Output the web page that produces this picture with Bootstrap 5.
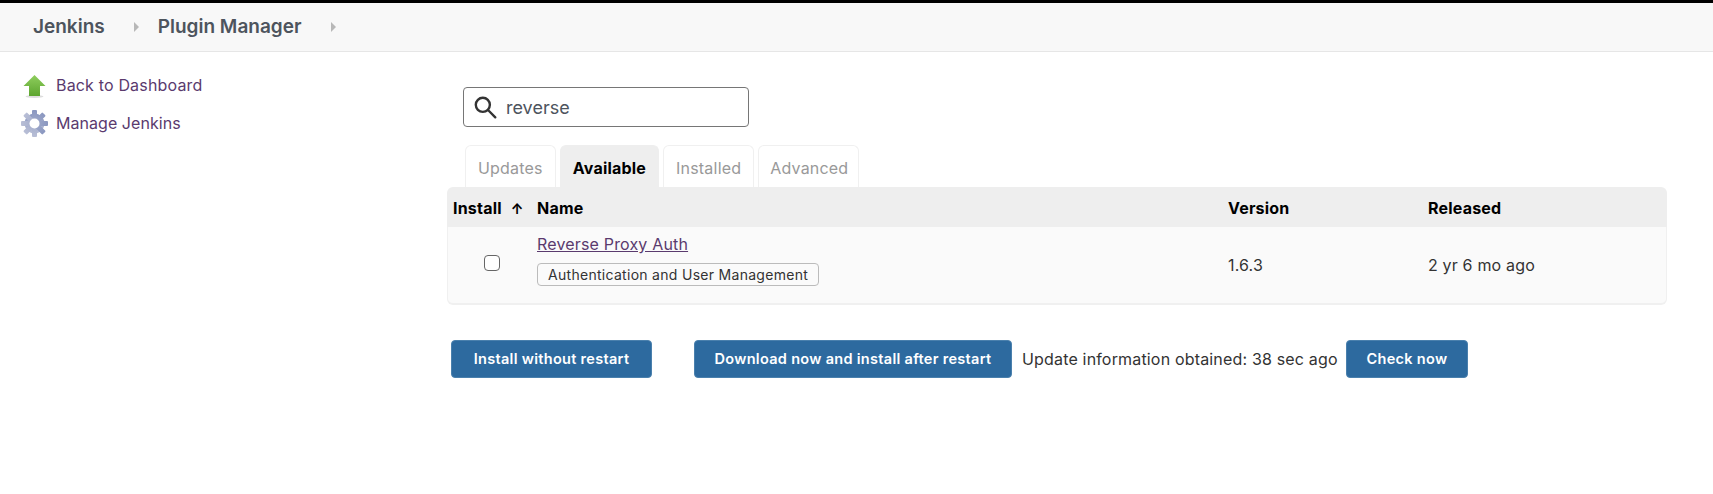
<!DOCTYPE html>
<html lang="en">
<head>
<meta charset="utf-8">
<title>Plugin Manager</title>
<link href="https://cdn.jsdelivr.net/npm/bootstrap@5.3.0/dist/css/bootstrap.min.css" rel="stylesheet">
<style>
html,body{height:494px;overflow:hidden}
body{font-family:Inter,"Liberation Sans",sans-serif;background:#fff;color:#333;font-size:15px;border-top:3px solid #000;letter-spacing:.17px}
.crumbbar{height:49px;background:#f8f8f8;border-bottom:1px solid #e6e6e6;padding-left:33px;color:#4d545d;font-weight:600;font-size:19px;letter-spacing:0}
.crumbsep{width:0;height:0;border-left:5px solid #b8b8b8;border-top:5px solid transparent;border-bottom:5px solid transparent}
.sep-a{margin:0 19px 0 29px}
.sep-b{margin-left:29px}
.sidepane{width:447px;flex:none;padding:14px 0 0 20px}
.sidelink{height:38px;color:#5a3a6e;text-decoration:none;font-size:16px;gap:7px}
.sidelink-tight{letter-spacing:.05px}
.sideicon{width:29px;height:29px;flex:none}
.mainpane{width:1220px;flex:none;padding-top:35px}
.searchbox{width:286px;height:40px;margin-left:16px;border:1px solid #767676;border-radius:4px;padding-left:8px;gap:8px}
.searchbox input{border:0;outline:0;background:transparent;width:230px;font-size:18px;color:#4d545d;font-family:inherit;padding:0}
.tabrow{margin:18px 0 0 18px;gap:4px;height:42px;list-style:none;padding:0}
.tabitem{height:42px;padding:2px 12px 0;border:1px solid #f0f0f0;border-bottom:0;border-radius:6px 6px 0 0;color:#999;font-size:16px;letter-spacing:.2px}
.tabitem.tab-on{background:#eee;border-color:#eee;color:#000;font-weight:700;padding:2px 12px 0}
.tabitem.tab-last{padding:2px 10px 0 11px}
.plugintable{width:1220px;height:118px;table-layout:fixed;margin:0;border-collapse:separate;border-spacing:0;--bs-table-bg:transparent}
.plugintable th{background:#eee;color:#000;height:40px;font-size:16px;font-weight:700;padding:2px 0 0;border:0;vertical-align:middle;letter-spacing:.2px}
.plugintable th:first-child{border-top-left-radius:6px}
.plugintable th:last-child{border-top-right-radius:6px}
.plugintable td{background:#fafafa;padding:0;border:0;border-bottom:2px solid #f0f0f0;vertical-align:middle;color:#333;font-size:16px}
.plugintable td:first-child{border-left:1px solid #f0f0f0;border-bottom-left-radius:6px}
.plugintable td:last-child{border-right:1px solid #f0f0f0;border-bottom-right-radius:6px}
.col-install{width:90px}
.col-name{width:691px}
.col-version{width:200px}
.plugintable th.install-head{padding-left:6px}
.sortarrow{margin-left:9px;font-size:14px}
.plugintable td.cell-check{padding-bottom:5px}
.rowcheck{width:16px;height:16px;border:1px solid #666;border-radius:3px;background:#fff;margin:0 0 0 36px;float:none;display:block}
.plugintable td.cell-name{vertical-align:top;padding-top:5px}
.pluginlink{color:#5a3a6e;font-size:16px;display:inline-block;line-height:24px}
.cattag{display:block;width:fit-content;margin-top:7px;height:23px;line-height:21px;border:1px solid #bbb;border-radius:4px;padding:0 10px;font-size:14px;font-weight:400;background:#fafafa;color:#333;letter-spacing:.29px}
.actionrow{margin:35px 0 0 4px;height:38px}
.jbtn{height:38px;background:#2d6a9f;border:1px solid #4a80ad;border-radius:4px;color:#fff;font-weight:600;font-size:14.500px;padding:0;letter-spacing:.3px}
.jbtn:hover{background:#2d6a9f;color:#fff}
.btn-a{width:201px;margin-right:42px}
.btn-b{width:318px;margin-right:10px}
.btn-c{width:122px;margin-left:9px}
.updateinfo{font-size:16px;color:#333;width:315px;white-space:nowrap}
</style>
</head>
<body>
<nav class="crumbbar d-flex align-items-center">
  <span>Jenkins</span><span class="crumbsep sep-a"></span><span>Plugin Manager</span><span class="crumbsep sep-b"></span>
</nav>
<div class="d-flex">
  <aside class="sidepane">
    <a class="sidelink d-flex align-items-center" href="#">
      <svg class="sideicon" viewBox="0 0 29 29"><defs><linearGradient id="ga" x1="0" y1="0" x2="0" y2="1"><stop offset="0" stop-color="#8fce5e"/><stop offset="1" stop-color="#5da52f"/></linearGradient></defs><ellipse cx="14.500" cy="25.500" rx="9" ry="1.500" fill="#ddd"/><path d="M14.500 4L25.500 15H20V25H9V15H3.500z" fill="url(#ga)"/></svg>
      <span>Back to Dashboard</span>
    </a>
    <a class="sidelink sidelink-tight d-flex align-items-center" href="#">
      <svg class="sideicon" viewBox="0 0 29 29"><defs><linearGradient id="gb" x1="0" y1="0" x2="0" y2="1"><stop offset="0" stop-color="#8a97c0"/><stop offset="1" stop-color="#b9bfd6"/></linearGradient></defs><g fill="url(#gb)"><circle cx="14.500" cy="14.500" r="10"/><rect x="12" y="1" width="5" height="27" rx="1"/><rect x="12" y="1" width="5" height="27" rx="1" transform="rotate(45 14.500 14.500)"/><rect x="12" y="1" width="5" height="27" rx="1" transform="rotate(90 14.500 14.500)"/><rect x="12" y="1" width="5" height="27" rx="1" transform="rotate(135 14.500 14.500)"/></g><circle cx="14.500" cy="14.500" r="5" fill="#fff"/></svg>
      <span>Manage Jenkins</span>
    </a>
  </aside>
  <main class="mainpane">
    <div class="searchbox d-flex align-items-center">
      <svg width="26" height="26" viewBox="0 0 24 24" fill="none" stroke="#333" stroke-width="2.200" stroke-linecap="round"><circle cx="10" cy="10" r="6.500"/><path d="M15 15l6.500 6.500"/></svg>
      <input type="text" value="reverse" aria-label="Search">
    </div>
    <ul class="tabrow d-flex">
      <li class="tabitem d-flex align-items-center">Updates</li>
      <li class="tabitem tab-on d-flex align-items-center">Available</li>
      <li class="tabitem d-flex align-items-center">Installed</li>
      <li class="tabitem tab-last d-flex align-items-center">Advanced</li>
    </ul>
    <table class="table plugintable">
      <thead><tr>
        <th class="col-install install-head">Install<span class="sortarrow">↑</span></th>
        <th class="col-name">Name</th>
        <th class="col-version">Version</th>
        <th>Released</th>
      </tr></thead>
      <tbody><tr>
        <td class="cell-check"><input class="form-check-input rowcheck" type="checkbox" aria-label="Install"></td>
        <td class="cell-name"><a class="pluginlink" href="#">Reverse Proxy Auth</a><span class="cattag">Authentication and User Management</span></td>
        <td>1.6.3</td>
        <td>2 yr 6 mo ago</td>
      </tr></tbody>
    </table>
    <div class="actionrow d-flex align-items-center">
      <button class="btn jbtn btn-a">Install without restart</button>
      <button class="btn jbtn btn-b">Download now and install after restart</button>
      <span class="updateinfo">Update information obtained: 38 sec ago</span>
      <button class="btn jbtn btn-c">Check now</button>
    </div>
  </main>
</div>
<script src="https://cdn.jsdelivr.net/npm/bootstrap@5.3.0/dist/js/bootstrap.bundle.min.js"></script>
</body>
</html>
